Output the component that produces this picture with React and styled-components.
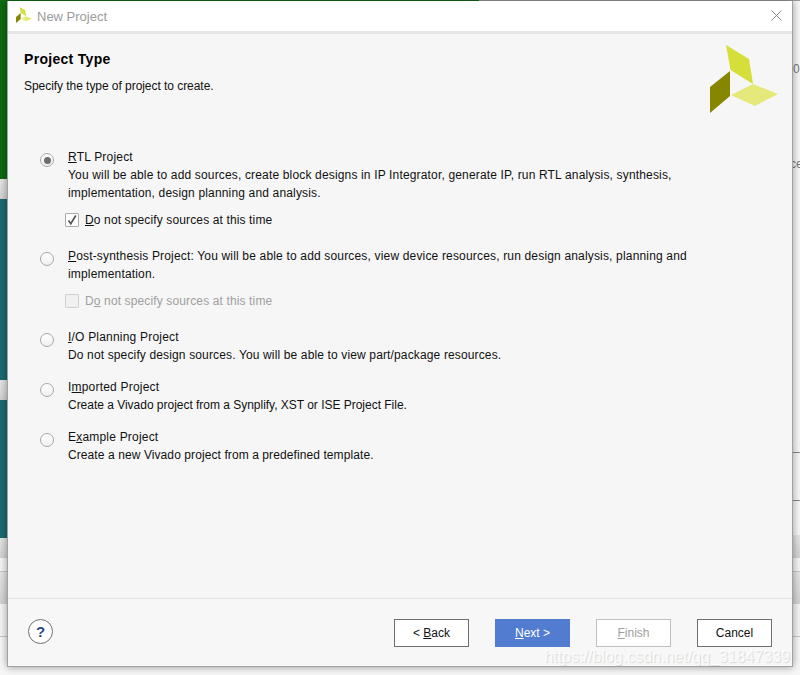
import React from 'react';
import styled, { createGlobalStyle } from 'styled-components';

const GlobalStyle = createGlobalStyle`
  html, body {
    margin: 0;
    padding: 0;
    background: #f7f7f7;
    overflow: hidden;
  }
  body {
    font-family: "Liberation Sans", Arial, sans-serif;
    font-size: 12px;
    color: #111;
  }
`;

const Page = styled.div`
  position: relative;
  width: 800px;
  height: 675px;
  overflow: hidden;
  display: flex;
  flex-direction: column;
`;

const TopEdge = styled.div`
  height: 1px;
  flex: none;
  background: linear-gradient(to right, #146c14 479px, #9a9a9a 479px);
`;

const Desktop = styled.div`
  flex: 1;
  display: grid;
  grid-template-columns: 7px 786px 7px;
  grid-template-rows: 666px 1fr;
`;

const Strip = styled.div`
  display: flex;
  flex-direction: column;
  overflow: hidden;
`;

const Band = styled.div`
  flex: none;
  height: ${(p) => p.$h}px;
  background: ${(p) => p.$bg};
  border-bottom: ${(p) => (p.$line ? '1px solid #c8c8c8' : 'none')};
  box-sizing: border-box;
  display: flex;
  align-items: flex-end;
  text-indent: ${(p) => p.$indent || 0}px;
  color: #777;
  font-size: 12px;
  line-height: 14px;
  white-space: nowrap;
`;

const grayBand = 'linear-gradient(#e6e6e6, #d2d2d2)';

const Window = styled.div`
  position: relative;
  z-index: 1;
  box-sizing: border-box;
  display: flex;
  flex-direction: column;
  background: #f6f6f6;
  border: 1px solid #a2a2a2;
  border-top: none;
  box-shadow: 0 0 8px rgba(0, 0, 0, 0.4);
`;

const TitleBar = styled.div`
  flex: none;
  height: 30px;
  background: #fff;
  display: flex;
  align-items: center;
  padding: 0 10px 0 8px;
`;

const AppIcon = styled.svg`
  width: 16px;
  height: 16px;
  margin: 0 5px 3px 0;
`;

const WindowTitle = styled.div`
  flex: 1;
  font-size: 13px;
  color: #9b9b9b;
`;

const CloseIcon = styled.svg`
  width: 11px;
  height: 11px;
  margin-bottom: 1px;
`;

const TitleRule = styled.div`
  flex: none;
  height: 3px;
  background: #e6e6e6;
`;

const Header = styled.div`
  flex: none;
  height: 114px;
  padding: 0 13px 0 16px;
  display: flex;
  justify-content: space-between;
`;

const Heading = styled.h1`
  margin: 17px 0 10px;
  font-size: 14px;
  line-height: 17px;
  font-weight: bold;
  letter-spacing: 0.3px;
  color: #000;
`;

const SubHeading = styled.div`
  line-height: 16px;
  letter-spacing: -0.05px;
`;

const Logo = styled.svg`
  width: 70px;
  height: 70px;
  margin-top: 10px;
`;

const Options = styled.div`
  flex: 1;
  padding: 0 32px;
  display: flex;
  flex-direction: column;
  gap: 14px;
`;

const Option = styled.div`
  display: grid;
  grid-template-columns: 28px 1fr;
  line-height: 18px;
`;

const Radio = styled.div`
  width: 14px;
  height: 14px;
  box-sizing: border-box;
  margin-top: 5px;
  border-radius: 50%;
  border: 1px solid #a8a8a8;
  background: linear-gradient(#fff, #f0f0f0);
  display: flex;
  align-items: center;
  justify-content: center;
  &::after {
    content: '';
    display: ${(p) => (p.$checked ? 'block' : 'none')};
    width: 7px;
    height: 7px;
    border-radius: 50%;
    background: #6e6e6e;
  }
`;

const OptionBody = styled.div`
  width: 660px;
  letter-spacing: ${(p) => p.$spacing}px;
`;

const OptionTitle = styled.div`
  letter-spacing: 0.2px;
`;

const SubRow = styled.div`
  margin: 9px 0 4px -3px;
  display: flex;
  align-items: center;
  gap: 6px;
  letter-spacing: 0.13px;
  color: ${(p) => (p.$disabled ? '#a0a0a0' : 'inherit')};
`;

const Check = styled.div`
  width: 12px;
  height: 12px;
  border: 1px solid ${(p) => (p.$disabled ? '#d0d0d0' : '#ababab')};
  border-radius: 1px;
  background: ${(p) => (p.$disabled ? '#f0f0f0' : '#fff')};
  display: flex;
  align-items: center;
  justify-content: center;
`;

const Mn = styled.span`
  text-decoration: underline;
`;

const Footer = styled.div`
  flex: none;
  height: 68px;
  box-sizing: border-box;
  border-top: 1px solid #e2e2e2;
  padding: 20px 20px 0;
  display: flex;
  align-items: flex-start;
  gap: 26px;
  background: #f7f7f7;
`;

const Help = styled.div`
  width: 23px;
  height: 23px;
  margin-right: auto;
  border: 1px solid #707070;
  border-radius: 50%;
  background: #fff;
  color: #2a4a8c;
  font-size: 15px;
  font-weight: bold;
  display: flex;
  align-items: center;
  justify-content: center;
`;

const Button = styled.div`
  width: 75px;
  height: 28px;
  box-sizing: border-box;
  display: flex;
  align-items: center;
  justify-content: center;
  border: 1px solid
    ${(p) => (p.$primary ? '#517cd0' : p.$disabled ? '#c0c0c0' : '#707070')};
  background: ${(p) => (p.$primary ? '#517cd0' : '#fff')};
  color: ${(p) => (p.$primary ? '#fff' : p.$disabled ? '#a0a0a0' : '#111')};
`;

const Watermark = styled.div`
  position: absolute;
  z-index: 2;
  right: 10px;
  bottom: 8px;
  font-size: 16px;
  line-height: 20px;
  color: rgba(255, 255, 255, 0.8);
  text-shadow: 1px 1px 1px rgba(0, 0, 0, 0.13);
  white-space: nowrap;
`;

const LogoShapes = () => (
  <>
    <polygon points="726,45 749,59 753,84 730.5,70" fill="#d6df3a" />
    <polygon points="730,71 730,96 710,113 710,87" fill="#868600" />
    <polygon points="753,84 778,94 755,106 731,95" fill="#e4e97a" />
  </>
);

const RadioOption = ({ checked, spacing, children }) => (
  <Option>
    <Radio $checked={checked} />
    <OptionBody $spacing={spacing}>{children}</OptionBody>
  </Option>
);

const SourcesRow = ({ checked, disabled, mnemonicAt }) => (
  <SubRow $disabled={disabled}>
    <Check $disabled={disabled}>
      {checked && (
        <svg width="12" height="12" viewBox="0 0 12 12">
          <path d="M2.5 6.5 L4.8 9.8 L9.8 1.5" fill="none" stroke="#555" strokeWidth="1.7" />
        </svg>
      )}
    </Check>
    <span>
      {mnemonicAt === 0 ? (
        <>
          <Mn>D</Mn>o
        </>
      ) : (
        <>
          D<Mn>o</Mn>
        </>
      )}{' '}
      not specify sources at this time
    </span>
  </SubRow>
);

export default function App() {
  return (
    <Page>
      <GlobalStyle />
      <TopEdge />
      <Desktop>
        <Strip>
          <Band $h={178} $bg="#0e6b0e" />
          <Band $h={20} $bg={grayBand} />
          <Band $h={181} $bg="#1a6a70" />
          <Band $h={20} $bg={grayBand} />
          <Band $h={138} $bg="#1a6a70" />
          <Band $h={20} $bg={grayBand} />
          <Band $h={14} $bg="#f5f5f5" $line />
          <Band $h={32} $bg={grayBand} />
          <Band $h={33} $bg="#f5f5f5" $line />
        </Strip>
        <Window>
          <TitleBar>
            <AppIcon viewBox="710 45 68 68">
              <LogoShapes />
            </AppIcon>
            <WindowTitle>New Project</WindowTitle>
            <CloseIcon viewBox="0 0 11 11">
              <path d="M0.5 0.5 L10.5 10.5 M10.5 0.5 L0.5 10.5" stroke="#8a8a8a" strokeWidth="1" fill="none" />
            </CloseIcon>
          </TitleBar>
          <TitleRule />
          <Header>
            <div>
              <Heading>Project Type</Heading>
              <SubHeading>Specify the type of project to create.</SubHeading>
            </div>
            <Logo viewBox="709 44 70 70">
              <LogoShapes />
            </Logo>
          </Header>
          <Options>
            <RadioOption checked spacing={0.16}>
              <OptionTitle>
                <Mn>R</Mn>TL Project
              </OptionTitle>
              You will be able to add sources, create block designs in IP Integrator, generate IP, run RTL
              analysis, synthesis,
              <br />
              implementation, design planning and analysis.
              <SourcesRow checked mnemonicAt={0} />
            </RadioOption>
            <RadioOption spacing={0.17}>
              <Mn>P</Mn>ost-synthesis Project: You will be able to add sources, view device resources, run
              design analysis, planning and
              <br />
              implementation.
              <SourcesRow disabled mnemonicAt={1} />
            </RadioOption>
            <RadioOption spacing={0.14}>
              <OptionTitle>
                <Mn>I</Mn>/O Planning Project
              </OptionTitle>
              Do not specify design sources. You will be able to view part/package resources.
            </RadioOption>
            <RadioOption spacing={-0.02}>
              <OptionTitle>
                I<Mn>m</Mn>ported Project
              </OptionTitle>
              Create a Vivado project from a Synplify, XST or ISE Project File.
            </RadioOption>
            <RadioOption spacing={0.09}>
              <OptionTitle>
                E<Mn>x</Mn>ample Project
              </OptionTitle>
              Create a new Vivado project from a predefined template.
            </RadioOption>
          </Options>
          <Footer>
            <Help>?</Help>
            <Button>
              &lt;&nbsp;<Mn>B</Mn>ack
            </Button>
            <Button $primary>
              <Mn>N</Mn>ext &gt;
            </Button>
            <Button $disabled>
              <Mn>F</Mn>inish
            </Button>
            <Button>Cancel</Button>
          </Footer>
        </Window>
        <Strip>
          <Band $h={75} $bg="#f7f7f7">0</Band>
          <Band $h={95} $bg="#f7f7f7" $indent={-3}>ce</Band>
          <Band $h={282} $bg="#f7f7f7">_t</Band>
          <Band $h={48} $bg="#f7f7f7">_t</Band>
          <Band $h={34} $bg="#f7f7f7" />
          <Band $h={23} $bg={grayBand} />
          <Band $h={14} $bg="#f5f5f5" $line />
          <Band $h={32} $bg={grayBand} />
          <Band $h={33} $bg="#f5f5f5" $line />
        </Strip>
      </Desktop>
      <Watermark>https://blog.csdn.net/qq_31847339</Watermark>
    </Page>
  );
}
